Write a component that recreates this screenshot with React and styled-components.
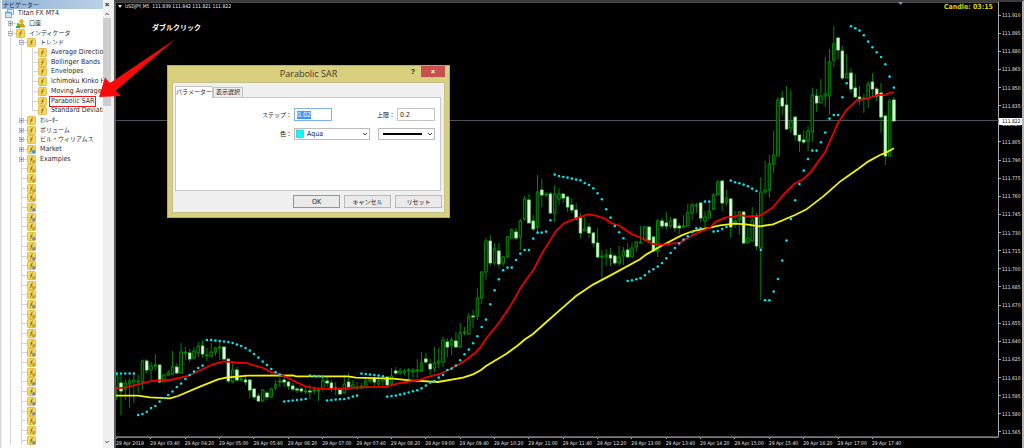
import React from 'react';
import styled, { createGlobalStyle } from 'styled-components';

const uiFont = `"DejaVu Sans Condensed", "DejaVu Sans", "Noto Sans CJK JP", sans-serif`;
const jpFont = `"Noto Sans", "Noto Sans CJK JP", sans-serif`;

const GlobalStyle = createGlobalStyle`
  * {
    box-sizing: border-box;
  }

  body {
    margin: 0;
    background: #000000;
    font-family: ${uiFont};
  }
`;

const Terminal = styled.div`
  position: relative;
  display: flex;
  height: 100vh;
  overflow: hidden;
`;

// ---------- Navigator ----------

const Sidebar = styled.aside`
  flex: 0 0 114px;
  min-width: 0;
  display: flex;
  flex-direction: column;
  background: #f0f0f0;
  border-left: 1px solid #d8d8d8;
  padding: 0 3px 0 1px;
`;

const SidebarTitle = styled.header`
  flex: 0 0 9px;
  display: flex;
  align-items: center;
  justify-content: space-between;
  background: linear-gradient(90deg, #93b3d3, #bcd2e8);
  color: #1d2c3c;
  font-family: ${jpFont};
  font-size: 6px;
  line-height: 8px;
  padding-left: 1px;
`;

const SidebarClose = styled.button`
  width: 8px;
  height: 9px;
  padding: 0;
  border: 0;
  background: #f0f0f0;
  color: #222222;
  font-size: 8px;
  font-weight: 700;
  line-height: 8px;
`;

const SidebarBody = styled.div`
  flex: 1;
  display: flex;
  min-height: 0;
`;

const Tree = styled.ul`
  flex: 1;
  min-width: 0;
  display: flex;
  flex-direction: column;
  list-style: none;
  margin: 0;
  padding: 0 0 3px 3px;
  background: #ffffff;
  overflow: hidden;
`;

const TreeRow = styled.li`
  flex: 1 1 0;
  min-height: 0;
  display: flex;
  align-items: center;
  color: #2b2b2b;
  font-size: 7px;
  line-height: 9px;
  white-space: nowrap;
`;

const Guide = styled.span`
  flex: 0 0 11px;
  align-self: stretch;
  display: flex;
  align-items: center;
  background:
    linear-gradient(#d4d4d4, #d4d4d4) 5px ${props => (props.$last ? '0 / 1px 50%' : '0 / 1px 100%')} no-repeat,
    ${props => (props.$branch ? 'linear-gradient(#d4d4d4, #d4d4d4) 6px 50% / 5px 1px no-repeat' : 'none')};
`;

const Expander = styled.svg`
  width: 5px;
  height: 5px;
  margin-left: 3px;
`;

const TreeIcon = styled.svg`
  flex: 0 0 9px;
  width: 9px;
  height: 9px;
`;

const TreeLabel = styled.span`
  margin-left: 3px;
  padding: 0 1px;
  font-family: ${props => (props.$jp ? jpFont : uiFont)};
  font-size: ${props => (props.$jp ? '6px' : '7px')};
  outline: ${props => (props.$marked ? '1px solid #f01c1c' : 'none')};
`;

const ScrollTrack = styled.div`
  flex: 0 0 8px;
  display: flex;
  flex-direction: column;
  background: #f0f0f0;
`;

const ScrollArrow = styled.svg`
  flex: 0 0 9px;
  width: 8px;
`;

const ScrollThumb = styled.div`
  flex: 0 0 20%;
  background: #cdcdcd;
`;

const ScrollSpace = styled.div`
  flex: 1;
`;

// ---------- Chart ----------

const ChartFrame = styled.main`
  flex: 1;
  min-width: 0;
  display: grid;
  grid-template-columns: minmax(0, 1fr) 23px;
  grid-template-rows: minmax(0, 1fr) 11px;
  position: relative;
  background: #000000;
  border-left: 2px solid #5a5a5a;
  border-top: 2px solid #3c3c3c;
  border-right: 2px solid #b4b4b4;
`;

const Plot = styled.svg`
  display: block;
  width: 100%;
  height: 100%;
`;

const ChartTitle = styled.div`
  position: absolute;
  top: 0;
  left: 2px;
  display: flex;
  align-items: center;
  gap: 3px;
  color: #f0f0f0;
  font-size: 5px;
  line-height: 9px;
  white-space: pre;
`;

const CandleTimer = styled.div`
  position: absolute;
  top: 0;
  right: 29px;
  color: #d6d600;
  font-size: 7px;
  font-weight: 700;
  line-height: 10px;
`;

const PriceAxis = styled.div`
  grid-column: 2;
  grid-row: 1 / 3;
  display: flex;
  flex-direction: column;
  padding: 4px 0 7px;
  position: relative;
`;

const Price = styled.span`
  flex: 1 1 0;
  min-height: 0;
  display: flex;
  align-items: center;
  gap: 1px;
  color: #e6e6e6;
  font-size: 5px;
  line-height: 8px;

  &::before {
    content: '';
    width: 2px;
    height: 1px;
    background: #a8a8a8;
  }
`;

const CurrentPrice = styled.span`
  position: absolute;
  top: 26%;
  left: 0;
  right: 0;
  padding-left: 3px;
  background: #ffffff;
  color: #000000;
  font-size: 5px;
  line-height: 7px;
`;

const TimeAxis = styled.div`
  grid-row: 2;
  display: grid;
  grid-template-columns: repeat(23, minmax(0, 1fr)) minmax(0, 2.7fr);
  border-top: 1px solid #7c7c7c;
`;

const Time = styled.span`
  color: #e6e6e6;
  font-size: 5px;
  line-height: 8px;
  white-space: nowrap;

  &::before {
    content: '';
    display: block;
    width: 1px;
    height: 1px;
    background: #a8a8a8;
  }
`;

// ---------- Annotation ----------

const Note = styled.p`
  position: absolute;
  top: 21px;
  left: 152px;
  margin: 0;
  color: #ffffff;
  font-family: ${jpFont};
  font-size: 7px;
  font-weight: 700;
  line-height: 14px;
`;

const Arrow = styled.svg`
  position: absolute;
  top: 36px;
  left: 96px;
  width: 82px;
  height: 64px;
`;

// ---------- Dialog ----------

const Dialog = styled.section`
  position: absolute;
  top: 65px;
  left: 167px;
  width: 283px;
  display: flex;
  flex-direction: column;
  padding: 0 4px 4px;
  background: #d9d07e;
  border: 1px solid #b5ac5e;
`;

const DialogTitle = styled.header`
  display: grid;
  grid-template-columns: 1fr auto 1fr;
  height: 16px;
`;

const DialogHeading = styled.h1`
  grid-column: 2;
  margin: 0;
  color: #3c3a26;
  font-family: "Open Sans", sans-serif;
  font-size: 9px;
  font-weight: 400;
  line-height: 16px;
`;

const TitleButtons = styled.div`
  display: flex;
  justify-content: flex-end;
  align-items: flex-start;
`;

const TitleButton = styled.button`
  width: ${props => (props.$close ? '24px' : '16px')};
  height: 11px;
  padding: 0;
  border: 0;
  background: ${props => (props.$close ? '#c75050' : 'transparent')};
  color: ${props => (props.$close ? '#ffffff' : '#222222')};
  font-size: 7px;
  font-weight: 700;
  line-height: 11px;
`;

const DialogBody = styled.form`
  background: #f0f0f0;
  border: 1px solid #c6c08a;
  padding: 3px 2px 4px;
`;

const TabList = styled.div`
  display: flex;
  align-items: flex-end;
`;

const Tab = styled.button`
  height: ${props => (props.$active ? '12px' : '10px')};
  width: ${props => (props.$active ? '38px' : '30px')};
  margin-bottom: ${props => (props.$active ? '-1px' : '0')};
  padding: 0;
  border: 1px solid #c4c4c4;
  border-bottom: 0;
  background: ${props => (props.$active ? '#ffffff' : '#ececec')};
  color: #222222;
  font-family: ${jpFont};
  font-size: 6px;
  line-height: 9px;
  white-space: nowrap;
  z-index: 1;
`;

const TabPanel = styled.div`
  height: 94px;
  display: grid;
  grid-template-columns: 118px 76px 27px 38px;
  grid-template-rows: 13px 12px;
  row-gap: 7px;
  align-items: center;
  margin-right: 1px;
  padding-top: 10px;
  background: #ffffff;
  border: 1px solid #c8c8c8;
`;

const Label = styled.label`
  color: #222222;
  font-family: ${jpFont};
  font-size: 6px;
  line-height: 12px;
  text-align: right;
  padding-right: 2px;
`;

const TextBox = styled.input`
  width: 38px;
  height: 13px;
  padding: 0 2px;
  border: 1px solid ${props => (props.$focus ? '#7eb4ea' : '#c4c4c4')};
  outline: 0;
  background: #ffffff;
  color: #222222;
  font-family: ${uiFont};
  font-size: 7px;
  line-height: 11px;

  &::selection {
    background: #3399ff;
    color: #ffffff;
  }
`;

const SelectBox = styled.div`
  position: relative;
  grid-column: ${props => (props.$wide ? '2' : '3 / 5')};
  justify-self: ${props => (props.$wide ? 'start' : 'end')};
  width: ${props => (props.$wide ? '76px' : '57px')};
  height: 12px;
`;

const Select = styled.select`
  appearance: none;
  display: block;
  width: 100%;
  height: 100%;
  padding: 0 0 0 12px;
  border: 1px solid #bcbcbc;
  border-radius: 0;
  background: #ffffff;
  color: #222222;
  font-family: ${uiFont};
  font-size: 7px;
  line-height: 10px;
`;

const SelectFace = styled.svg`
  position: absolute;
  inset: 0;
  width: 100%;
  height: 100%;
  pointer-events: none;
`;

const DialogActions = styled.div`
  display: flex;
  justify-content: flex-end;
  gap: 4px;
  padding-top: 4px;
`;

const ActionButton = styled.button`
  width: 47px;
  height: 13px;
  padding: 0;
  border: 1px solid ${props => (props.$primary ? '#5aa5e6' : '#b8b8b8')};
  background: #eaeaea;
  color: #222222;
  font-family: ${props => (props.$jp ? jpFont : uiFont)};
  font-size: ${props => (props.$jp ? '6px' : '7px')};
  line-height: 10px;
`;

// ---------- Data ----------

const navigator = [
  { level: 0, label: 'Titan FX MT4', icon: 'root' },
  { level: 1, label: '口座', icon: 'accounts', toggle: '+', jp: true },
  { level: 1, label: 'インディケータ', icon: 'fx', toggle: '-', jp: true },
  { level: 2, label: 'トレンド', icon: 'fx', toggle: '-', jp: true },
  { level: 3, label: 'Average Directional', icon: 'fx' },
  { level: 3, label: 'Bollinger Bands', icon: 'fx' },
  { level: 3, label: 'Envelopes', icon: 'fx' },
  { level: 3, label: 'Ichimoku Kinko Hyo', icon: 'fx' },
  { level: 3, label: 'Moving Average', icon: 'fx' },
  { level: 3, label: 'Parabolic SAR', icon: 'fx', marked: true },
  { level: 3, label: 'Standard Deviation', icon: 'fx', last: true },
  { level: 2, label: 'ｵｼﾚｰﾀｰ', icon: 'fx', toggle: '+', jp: true },
  { level: 2, label: 'ボリューム', icon: 'fx', toggle: '+', jp: true },
  { level: 2, label: 'ビル・ウィリアムス', icon: 'fx', toggle: '+', jp: true },
  { level: 2, label: 'Market', icon: 'fx', toggle: '+', badge: '#3d8fe0' },
  { level: 2, label: 'Examples', icon: 'fx', toggle: '+', badge: '#c9a227' },
];

// g = gold badge, s = silver badge
const customIndicators = 'ggggssgssssgggsggggsggssssggs'.split('').map(kind => ({
  level: 2,
  icon: 'fx',
  badge: kind === 'g' ? '#c9a227' : '#8a8a8a',
}));

const prices = Array.from({ length: 24 }, (_, i) => (111.91 - i * 0.015).toFixed(3));

const times = Array.from({ length: 23 }, (_, i) => {
  if (i === 0) return '29 Apr 2019';
  const minutes = 180 + i * 40;
  const hh = String(Math.floor(minutes / 60)).padStart(2, '0');
  const mm = String(minutes % 60).padStart(2, '0');
  return `29 Apr ${hh}:${mm}`;
});

// wick top, wick bottom, body top, body bottom, 1 = falling candle
const candles = [
  [372, 400, 375, 388, 0], [375, 415, 383, 391, 1], [379, 400, 383, 389, 0], [378, 408, 381, 384, 0],
  [374, 403, 380, 382, 0], [375, 393, 381, 382, 0], [360, 390, 361, 382, 0], [359, 373, 361, 370, 1],
  [362, 380, 366, 370, 0], [354, 370, 365, 366, 0], [365, 383, 365, 382, 1], [374, 382, 375, 382, 0],
  [370, 376, 373, 375, 0], [351, 375, 367, 374, 0], [363, 374, 367, 373, 1], [343, 374, 352, 373, 0],
  [347, 360, 352, 353, 0], [349, 362, 353, 359, 1], [347, 360, 351, 358, 0], [342, 357, 346, 353, 0],
  [340, 358, 346, 354, 1], [348, 361, 355, 356, 0], [343, 358, 352, 356, 0], [347, 356, 348, 352, 0],
  [341, 360, 347, 348, 0], [347, 360, 347, 359, 1], [359, 383, 359, 381, 1], [362, 383, 370, 382, 0],
  [367, 382, 370, 380, 1], [375, 382, 379, 380, 0], [374, 385, 380, 382, 1], [379, 398, 380, 390, 1],
  [388, 400, 389, 397, 1], [393, 402, 396, 401, 1], [389, 402, 390, 401, 0], [391, 400, 393, 397, 1],
  [388, 398, 389, 397, 0], [380, 390, 385, 388, 0], [378, 387, 381, 382, 0], [377, 387, 380, 382, 1],
  [381, 390, 382, 386, 1], [383, 391, 386, 389, 1], [387, 393, 389, 390, 1], [387, 393, 389, 391, 1],
  [388, 394, 391, 392, 0], [385, 399, 391, 392, 1], [387, 394, 390, 391, 0], [388, 401, 390, 391, 0],
  [378, 391, 381, 389, 0], [377, 387, 381, 383, 1], [380, 392, 383, 389, 1], [382, 395, 388, 389, 1],
  [387, 395, 389, 394, 1], [375, 394, 384, 393, 0], [373, 390, 382, 387, 1], [380, 389, 385, 388, 0],
  [382, 390, 387, 388, 0], [383, 389, 386, 388, 0], [378, 388, 381, 387, 0], [377, 383, 379, 381, 0],
  [377, 387, 378, 382, 1], [377, 387, 381, 384, 0], [377, 387, 378, 381, 0], [377, 388, 377, 385, 1],
  [368, 386, 376, 384, 0], [367, 375, 371, 373, 1], [368, 375, 371, 373, 0], [369, 375, 371, 373, 0],
  [368, 380, 370, 371, 0], [368, 378, 370, 372, 0], [359, 378, 370, 371, 0], [352, 372, 363, 371, 0],
  [353, 364, 359, 362, 1], [359, 375, 364, 369, 1], [347, 372, 363, 368, 0], [348, 368, 361, 363, 0],
  [337, 367, 340, 362, 0], [338, 357, 342, 347, 1], [337, 355, 340, 345, 0], [332, 348, 341, 347, 1],
  [323, 348, 333, 347, 0], [327, 335, 332, 333, 0], [313, 335, 317, 334, 0], [310, 328, 316, 317, 1],
  [288, 320, 298, 316, 0], [271, 304, 272, 298, 0], [238, 280, 241, 272, 0], [235, 266, 241, 263, 1],
  [243, 265, 249, 263, 0], [243, 267, 251, 264, 1], [256, 266, 257, 263, 0], [236, 258, 237, 257, 0],
  [228, 239, 230, 238, 0], [228, 240, 232, 238, 1], [219, 250, 221, 237, 0], [196, 221, 199, 219, 0],
  [194, 223, 200, 223, 1], [215, 231, 221, 229, 1], [175, 232, 192, 227, 0], [179, 207, 190, 195, 1],
  [192, 197, 194, 195, 0], [192, 214, 194, 213, 1], [185, 222, 194, 213, 0], [188, 205, 194, 199, 0],
  [193, 203, 194, 198, 1], [196, 212, 197, 207, 1], [198, 213, 205, 210, 1], [203, 220, 210, 219, 1],
  [213, 238, 218, 233, 1], [217, 231, 229, 231, 0], [223, 238, 227, 233, 1], [232, 247, 233, 243, 1],
  [228, 258, 243, 257, 1], [250, 279, 256, 257, 0], [249, 266, 255, 257, 0], [248, 266, 255, 258, 1],
  [254, 265, 256, 263, 1], [246, 266, 257, 263, 0], [247, 265, 251, 256, 0], [243, 257, 250, 257, 1],
  [243, 257, 248, 257, 0], [241, 252, 242, 247, 0], [226, 243, 242, 243, 0], [226, 240, 227, 240, 0],
  [227, 243, 227, 240, 1], [236, 252, 237, 251, 1], [219, 257, 221, 251, 0], [218, 229, 221, 226, 1],
  [212, 230, 223, 226, 1], [217, 228, 221, 226, 0], [218, 232, 219, 228, 1], [223, 234, 226, 228, 1],
  [215, 228, 226, 227, 0], [204, 227, 213, 226, 0], [203, 220, 205, 213, 0], [203, 213, 205, 206, 0],
  [202, 222, 203, 218, 1], [211, 231, 217, 221, 0], [202, 218, 211, 218, 0], [193, 210, 195, 209, 0],
  [180, 195, 182, 195, 0], [180, 211, 181, 203, 1], [190, 205, 198, 202, 0], [198, 238, 199, 227, 1],
  [211, 228, 221, 223, 0], [211, 235, 212, 220, 0], [212, 244, 212, 243, 1], [228, 243, 238, 243, 0],
  [207, 242, 220, 241, 0], [213, 250, 217, 246, 1], [177, 300, 192, 248, 0], [161, 194, 190, 192, 0],
  [155, 198, 164, 190, 0], [131, 173, 155, 164, 0], [97, 156, 100, 156, 0], [91, 115, 98, 106, 1],
  [86, 130, 105, 129, 1], [90, 133, 122, 128, 0], [117, 141, 117, 135, 1], [135, 152, 135, 141, 1],
  [130, 144, 140, 142, 1], [126, 151, 131, 141, 0], [88, 142, 95, 132, 0], [89, 112, 96, 103, 1],
  [79, 103, 96, 103, 0], [57, 107, 94, 96, 0], [49, 115, 62, 96, 0], [26, 67, 44, 60, 0],
  [37, 59, 38, 50, 1], [46, 80, 51, 78, 1], [54, 78, 74, 78, 0], [68, 93, 73, 89, 1],
  [74, 97, 88, 97, 1], [86, 105, 97, 100, 1], [94, 113, 98, 99, 0], [81, 108, 84, 99, 0],
  [73, 97, 82, 89, 1], [87, 101, 89, 96, 1], [83, 133, 93, 117, 1], [115, 165, 116, 156, 1],
  [99, 156, 101, 156, 0], [97, 121, 100, 121, 1],
];

// one parabolic dot per candle
const sar = [
  373.5, 373.5, 373.5, 373.5, 373.5, 415, 414, 411.7, 408, 406, 401.6, 398, 395, 391.5, 387, 383.5, 379, 375,
  371.6, 368, 365.6, 340, 340, 340.6, 341, 341.5, 342, 343, 344.6, 346, 348, 350.6, 354, 357.6, 361.6, 365, 369,
  372, 374.5, 401.5, 401, 400.5, 400, 399.6, 399, 375.5, 376, 376.3, 376.6, 400.5, 400, 399.6, 399.3, 399, 398,
  396.6, 395.6, 373.6, 374, 374.5, 375, 375.6, 376.3, 396.6, 396, 395.6, 394.6, 393.6, 392.5, 391.3, 390.3,
  388.3, 385.6, 382.6, 381, 377.6, 375, 370, 368.6, 365.6, 360.3, 354.3, 349.6, 343.3, 336.3, 327, 319.6, 304.3,
  290.3, 279.3, 270.3, 267.6, 267.6, 260, 253.6, 250, 250, 238.6, 232.6, 232.6, 231.6, 220.3, 174.6, 176, 177,
  177.6, 178.6, 179.6, 180.3, 183, 185, 188.3, 193.3, 199.3, 209.3, 217.6, 226, 232.3, 238.3, 281, 280.3, 279.3,
  278.3, 275.3, 271.6, 269.3, 266.6, 263, 258.3, 253, 248, 243.6, 239.6, 236.3, 232.3, 228.3, 228.3, 201.6,
  201.6, 231.6, 231, 229, 227, 180.6, 182.3, 183.3, 184.6, 186.3, 188.6, 191, 250, 300.3, 300.3, 291.6, 279,
  260.6, 240.6, 219, 200.3, 184, 170.6, 159, 150.6, 150.6, 142.3, 132.6, 118.6, 115, 115, 97.3, 83.3, 26.3, 28.3,
  30.6, 35.3, 41.6, 47.3, 52.3, 57, 64.3, 76.6, 87.6,
];

const fastAverage =
  '116,388.3 125,387.6 138,384.3 153,380.6 170,380 188,376 203,369 213,364.3 224,361.3 241,363 245,362.6 263,368 ' +
  '270,371.6 283,375.6 296,382 306,386.6 318,388.6 340,389 353,387.6 386,386.6 400,383 420,380 426,377.3 440,374 ' +
  '450,369.3 463,362 475,353 481,346.6 485,340 498,324 510,306.6 520,289 525,281.6 534,269 543,251.6 556,231 ' +
  '564,223.3 576,218.3 588,214.3 596,215.6 606,219 610,222.6 620,226 631,233.6 640,237.3 653,244 663,244.6 ' +
  '680,242.6 693,235 710,227.6 716,221.6 726,217.3 735,216.6 740,214.6 746,216.3 758,216 763,214 773,207.3 ' +
  '783,195 794,184 803,179.3 811,171.6 825,152.3 830,141 838,123 846,110.6 857,100 868,98.6 878,94.6 885,95.3 ' +
  '888,93.3 894,92.3';

const slowAverage =
  '116,395.6 138,395.6 150,397.3 170,398.3 178,396 200,386.6 218,379.3 226,377.6 248,375.6 293,375.3 296,376.3 ' +
  '348,376.3 356,377.6 393,378.6 410,380.3 438,382 463,377.6 473,374.3 481,370 486,366 506,354 518,345.3 525,339.3 ' +
  '533,334 543,325 563,307.3 576,296 593,284.6 610,275.6 640,259.3 646,254.6 663,245 681,235.6 693,231 710,227.6 ' +
  '720,225.3 735,223.6 746,224.3 760,226.3 773,224.3 795,215 806,209.6 823,196.6 840,181.6 848,176 858,169 ' +
  '868,161.6 880,155 886,152.6 894,148.3';

const candleX = i => 116.7 + i * 4.294;

// ---------- Components ----------

function NodeIcon({ type, badge }) {
  if (type === 'root') {
    return (
      <TreeIcon viewBox="0 0 9 9">
        <rect x="2.5" y="0.5" width="6" height="5" fill="#e8f3fc" stroke="#6aa5d8" strokeWidth="0.8" />
        <rect x="0.5" y="3" width="6" height="5.5" fill="#d4e8f8" stroke="#5b98cf" strokeWidth="0.8" />
        <rect x="0.5" y="3" width="6" height="1.6" fill="#6fb0e4" />
      </TreeIcon>
    );
  }
  if (type === 'accounts') {
    return (
      <TreeIcon viewBox="0 0 9 9">
        <circle cx="5.4" cy="2.3" r="2.1" fill="#e0b020" />
        <path d="M1.6 8.6C1.6 5.4 3.4 4.2 5.5 4.2S9 5.4 9 8.6Z" fill="#d29c14" />
        <circle cx="2" cy="5.4" r="1.3" fill="#5cc04a" />
        <path d="M0 9C0 7.2 0.8 6.6 2 6.6S4 7.2 4 9Z" fill="#2fae26" />
      </TreeIcon>
    );
  }
  return (
    <TreeIcon viewBox="0 0 9 9">
      <rect x="0.5" y="0.5" width="8" height="8" rx="0.8" fill="#f6d75e" stroke="#d9b23a" strokeWidth="0.8" />
      <path d="M5.8 2.1C4.6 1.9 4.6 3 4.4 4.4S4 6.9 3 6.8M3.2 4.2H5.6" fill="none" stroke="#7a5c10" strokeWidth="0.8" />
      {badge && <circle cx="6.8" cy="6.8" r="1.8" fill={badge} />}
    </TreeIcon>
  );
}

function TreeNode({ node }) {
  const guides = Array.from({ length: node.level });
  return (
    <TreeRow>
      {guides.map((_, i) => {
        const own = i === node.level - 1;
        return (
          <Guide key={i} $branch={own} $last={own && node.last}>
            {own && node.toggle && (
              <Expander viewBox="0 0 5 5">
                <rect x="0.5" y="0.5" width="4" height="4" fill="#f4f6fa" stroke="#9aa3b5" strokeWidth="0.7" />
                <path d={node.toggle === '+' ? 'M1.2 2.5H3.8M2.5 1.2V3.8' : 'M1.2 2.5H3.8'} stroke="#40538a" strokeWidth="0.6" />
              </Expander>
            )}
          </Guide>
        );
      })}
      <NodeIcon type={node.icon} badge={node.badge} />
      {node.label && (
        <TreeLabel $jp={node.jp} $marked={node.marked}>{node.label}</TreeLabel>
      )}
    </TreeRow>
  );
}

function Navigator() {
  return (
    <Sidebar>
      <SidebarTitle>
        <span>ナビゲーター</span>
        <SidebarClose type="button" aria-label="Close navigator">×</SidebarClose>
      </SidebarTitle>
      <SidebarBody>
        <Tree>
          {[...navigator, ...customIndicators].map((node, i) => (
            <TreeNode key={i} node={node} />
          ))}
        </Tree>
        <ScrollTrack>
          <ScrollArrow viewBox="0 0 8 9">
            <path d="M2.3 6L4 4.2L5.7 6" fill="none" stroke="#505050" />
          </ScrollArrow>
          <ScrollThumb />
          <ScrollSpace />
          <ScrollArrow viewBox="0 0 8 9">
            <path d="M2.3 2L4 3.8L5.7 2" fill="none" stroke="#505050" />
          </ScrollArrow>
        </ScrollTrack>
      </SidebarBody>
    </Sidebar>
  );
}

function Chart() {
  return (
    <ChartFrame>
      <Plot viewBox="116 2 883 435" preserveAspectRatio="none">
        <path d="M116 2.5H999" stroke="#7a7a7a" strokeWidth="0.6" />
        <path d="M998.5 2V437" stroke="#a8a8a8" />
        <path d="M116 436.5H999" stroke="#5a5a5a" />
        <path d="M116 120.5H999" stroke="#4a545c" />
        {candles.map(([high, low, top, bottom, falling], i) => (
          <g key={i}>
            <path d={`M${candleX(i)} ${high}V${low}`} stroke="#009600" strokeWidth="0.9" />
            <rect
              x={candleX(i) - 1.3}
              y={top}
              width="2.6"
              height={Math.max(bottom - top, 0.8)}
              fill={falling ? '#e6ffe6' : '#002400'}
              stroke={falling ? '#7be07b' : '#00a400'}
              strokeWidth="0.8"
            />
          </g>
        ))}
        <polyline points={slowAverage} fill="none" stroke="#f4f400" strokeWidth="1.8" />
        <polyline points={fastAverage} fill="none" stroke="#ea0000" strokeWidth="1.8" />
        {sar.map((y, i) => (
          <circle key={i} cx={candleX(i)} cy={y} r="1.3" fill="#00e4f0" />
        ))}
        <path d="M898 2H903L900.5 5Z" fill="#8796a8" />
      </Plot>
      <PriceAxis>
        {prices.map(price => (
          <Price key={price}>{price}</Price>
        ))}
        <CurrentPrice>111.822</CurrentPrice>
      </PriceAxis>
      <TimeAxis>
        {times.map(time => (
          <Time key={time}>{time}</Time>
        ))}
      </TimeAxis>
      <ChartTitle>
        <svg width="4" height="3" viewBox="0 0 4 3">
          <path d="M0 0H4L2 3Z" fill="#e6e6e6" />
        </svg>
        <span>USDJPY,M5  111.839 111.842 111.821 111.822</span>
      </ChartTitle>
      <CandleTimer>Candle: 03:15</CandleTimer>
    </ChartFrame>
  );
}

function IndicatorDialog() {
  const selectAll = input => {
    if (input) {
      input.focus();
      input.select();
    }
  };

  return (
    <Dialog role="dialog" aria-labelledby="dialog-title">
      <DialogTitle>
        <DialogHeading id="dialog-title">Parabolic SAR</DialogHeading>
        <TitleButtons>
          <TitleButton type="button">?</TitleButton>
          <TitleButton type="button" $close aria-label="Close">×</TitleButton>
        </TitleButtons>
      </DialogTitle>
      <DialogBody>
        <TabList>
          <Tab type="button" $active>パラメーター</Tab>
          <Tab type="button">表示選択</Tab>
        </TabList>
        <TabPanel>
          <Label htmlFor="step">ステップ：</Label>
          <TextBox id="step" defaultValue="0.02" $focus ref={selectAll} />
          <Label htmlFor="maximum">上限：</Label>
          <TextBox id="maximum" defaultValue="0.2" />
          <Label htmlFor="color">色：</Label>
          <SelectBox $wide>
            <Select id="color" defaultValue="Aqua">
              <option>Aqua</option>
            </Select>
            <SelectFace viewBox="0 0 76 12">
              <rect x="2.5" y="2" width="7" height="7.5" fill="#00ffff" stroke="#5a8a8a" strokeWidth="0.5" />
              <path d="M69 5L71 7L73 5" fill="none" stroke="#444444" />
            </SelectFace>
          </SelectBox>
          <SelectBox>
            <Select aria-label="Line style" />
            <SelectFace viewBox="0 0 57 12">
              <path d="M5 6H44" stroke="#000000" strokeWidth="1.8" />
              <path d="M50 5L52 7L54 5" fill="none" stroke="#444444" />
            </SelectFace>
          </SelectBox>
        </TabPanel>
        <DialogActions>
          <ActionButton type="button" $primary>OK</ActionButton>
          <ActionButton type="button" $jp>キャンセル</ActionButton>
          <ActionButton type="button" $jp>リセット</ActionButton>
        </DialogActions>
      </DialogBody>
    </Dialog>
  );
}

export default function App() {
  return (
    <Terminal>
      <GlobalStyle />
      <Navigator />
      <Chart />
      <IndicatorDialog />
      <Note>ダブルクリック</Note>
      <Arrow viewBox="96 36 82 64">
        <path d="M175.5 39L116 90.5L121 96L99 97L105 77.5L110 83Z" fill="#f80a0a" />
      </Arrow>
    </Terminal>
  );
}
